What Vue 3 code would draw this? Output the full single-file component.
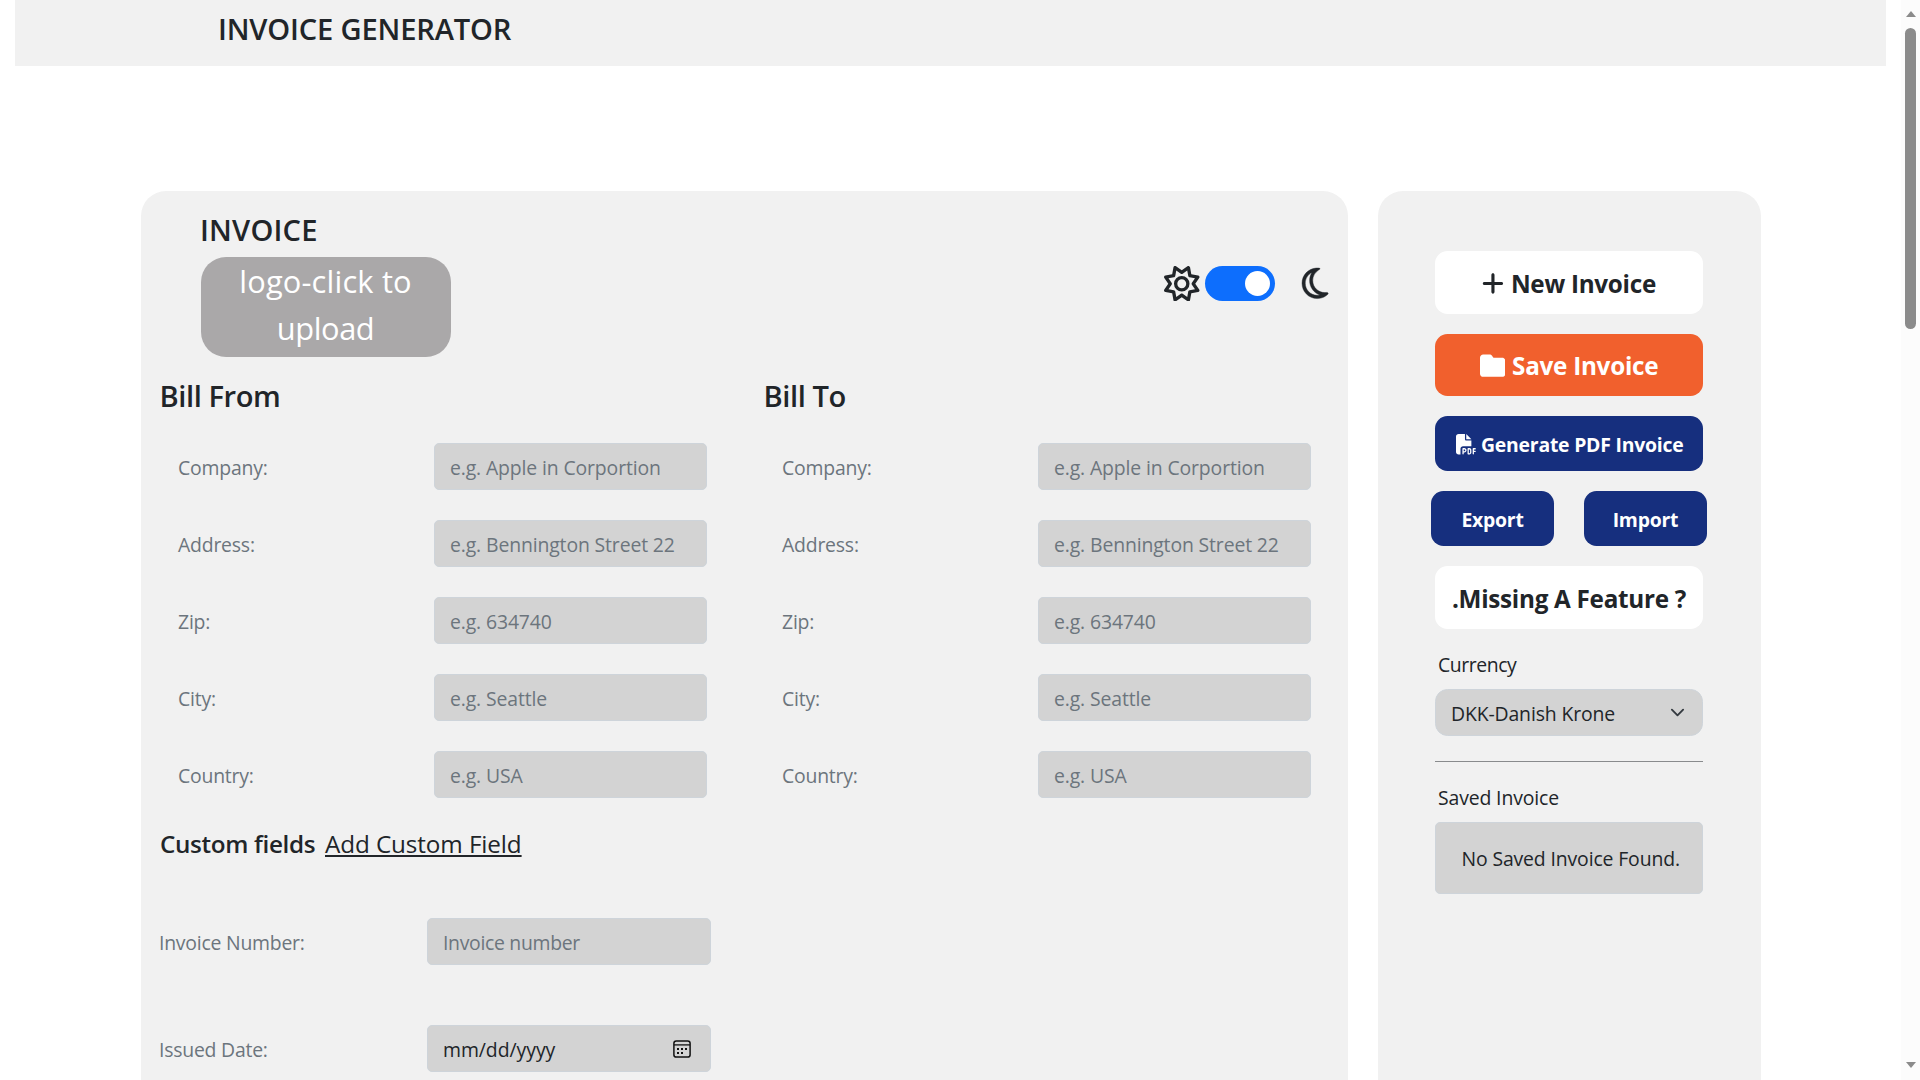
<script setup>
import { ref } from 'vue'

const parties = [{ title: 'Bill From' }, { title: 'Bill To' }]

const fields = [
  { label: 'Company:', placeholder: 'e.g. Apple in Corportion' },
  { label: 'Address:', placeholder: 'e.g. Bennington Street 22' },
  { label: 'Zip:', placeholder: 'e.g. 634740' },
  { label: 'City:', placeholder: 'e.g. Seattle' },
  { label: 'Country:', placeholder: 'e.g. USA' },
]

const dark = ref(true)
</script>

<template>
  <div class="page">
    <div class="content">
      <header class="topbar">
        <h1>INVOICE GENERATOR</h1>
      </header>

      <main class="columns">
        <section class="panel invoice">
          <h2 class="invoice-title">INVOICE</h2>
          <div class="brand-row">
            <button class="logo" type="button">
              <span class="logo-line">logo-click to</span>
              <span class="logo-line tight">upload</span>
            </button>
            <div class="theme">
              <svg class="sun" viewBox="0 0 512 512" fill="currentColor">
                <path d="M375.7 19.7c-1.5-8-6.9-14.7-14.4-17.8s-16.1-2.2-22.8 2.4L256 61.1 173.5 4.2c-6.7-4.6-15.3-5.5-22.8-2.4s-12.9 9.8-14.4 17.8l-18.1 98.5L19.7 136.3c-8 1.5-14.7 6.9-17.8 14.4s-2.2 16.1 2.4 22.8L61.1 256 4.2 338.5c-4.6 6.7-5.5 15.3-2.4 22.8s9.8 13 17.8 14.4l98.5 18.1 18.1 98.5c1.5 8 6.9 14.7 14.4 17.8s16.1 2.2 22.8-2.4L256 450.9l82.5 56.9c6.7 4.6 15.3 5.5 22.8 2.4s12.9-9.8 14.4-17.8l18.1-98.5 98.5-18.1c8-1.5 14.7-6.9 17.8-14.4s2.2-16.1-2.4-22.8L450.9 256l56.9-82.5c4.6-6.7 5.5-15.3 2.4-22.8s-9.8-12.9-17.8-14.4l-98.5-18.1L375.7 19.7zM269.6 110l65.6-45.2 14.4 78.3c1.8 9.8 9.5 17.5 19.3 19.3l78.3 14.4L402 242.4c-5.7 8.2-5.7 19 0 27.2l45.2 65.6-78.3 14.4c-9.8 1.8-17.5 9.5-19.3 19.3l-14.4 78.3L269.6 402c-8.2-5.7-19-5.7-27.2 0l-65.6 45.2-14.4-78.3c-1.8-9.8-9.5-17.5-19.3-19.3L64.8 335.2 110 269.6c5.7-8.2 5.7-19 0-27.2L64.8 176.8l78.3-14.4c9.8-1.8 17.5-9.5 19.3-19.3l14.4-78.3L242.4 110c8.2 5.7 19 5.7 27.2 0zM256 368a112 112 0 1 0 0-224 112 112 0 1 0 0 224zM192 256a64 64 0 1 1 128 0 64 64 0 1 1 -128 0z" />
              </svg>
              <button class="switch" :class="{ on: dark }" type="button" aria-label="Theme" @click="dark = !dark">
                <span class="knob"></span>
              </button>
              <svg class="moon" viewBox="0 32 384 448" fill="currentColor" fill-rule="evenodd" stroke="currentColor" stroke-width="6">
                <path d="M144.7 98.7c-21 34.1-33.1 74.3-33.1 117.3c0 98 62.8 181.4 150.4 211.7c-12.4 2.8-25.3 4.3-38.6 4.3C126.6 432 48 353.3 48 256c0-68.9 39.4-128.4 96.8-157.3zM206.8 32.7C91.1 41.2 0 137.9 0 256C0 379.7 100 480 223.5 480C271.3 480 315.5 465 351.9 439.4C361.6 432.5 370.6 425 379 416.7C384 411.8 385.3 404.2 382.1 398S372 388.3 365.1 389.5C355.3 391.2 345.2 392 335 392C236 392 157.6 315 157.6 216C157.6 150 193 94 243 62.5C247 60 251 57.5 255 55.5C261 52 264.5 45 263 40S255.8 33.5 249 33C240 32 228 31.8 206.8 32.7Z" />
              </svg>
            </div>
          </div>

          <div class="parties">
            <div v-for="party in parties" :key="party.title" class="party">
              <h3>{{ party.title }}</h3>
              <label v-for="field in fields" :key="field.label" class="field">
                <span class="field-label">{{ field.label }}</span>
                <input class="control" type="text" :placeholder="field.placeholder" />
              </label>
            </div>
          </div>

          <div class="custom">
            <h4>Custom fields</h4>
            <a>Add Custom Field</a>
          </div>

          <div class="details">
            <label class="detail">
              <span class="detail-label">Invoice Number:</span>
              <input class="control" type="text" placeholder="Invoice number" />
            </label>
            <label class="detail">
              <span class="detail-label">Issued Date:</span>
              <span class="control date">
                mm/dd/yyyy
                <svg class="calendar" viewBox="0 0 18 18">
                  <rect x="0.9" y="0.9" width="16.2" height="16.2" rx="2.4" fill="none" stroke="#111" stroke-width="1.5" />
                  <path d="M1 4.9h16" stroke="#111" stroke-width="1.3" />
                  <g fill="#111">
                    <rect x="4" y="8" width="2" height="2" />
                    <rect x="8" y="8" width="2" height="2" />
                    <rect x="12" y="8" width="2" height="2" />
                    <rect x="4" y="12" width="2" height="2" />
                    <rect x="8" y="12" width="2" height="2" />
                  </g>
                </svg>
              </span>
            </label>
          </div>
        </section>

        <aside class="panel actions">
          <button class="btn light big new" type="button">
            <svg class="plus" viewBox="0 0 448 512" fill="currentColor">
              <path d="M256 80c0-17.7-14.3-32-32-32s-32 14.3-32 32V224H48c-17.7 0-32 14.3-32 32s14.3 32 32 32H192V432c0 17.7 14.3 32 32 32s32-14.3 32-32V288H400c17.7 0 32-14.3 32-32s-14.3-32-32-32H256V80z" />
            </svg>
            New Invoice
          </button>
          <button class="btn orange big save" type="button">
            <svg class="folder" viewBox="0 0 512 512" fill="currentColor">
              <path d="M64 480H448c35.3 0 64-28.7 64-64V160c0-35.3-28.7-64-64-64H288c-10.1 0-19.6-4.7-25.6-12.8L243.2 57.6C231.1 41.5 212.1 32 192 32H64C28.7 32 0 60.7 0 96V416c0 35.3 28.7 64 64 64z" />
            </svg>
            Save Invoice
          </button>
          <button class="btn navy generate" type="button">
            <svg class="pdf" viewBox="0 0 512 512" fill="currentColor">
              <path d="M0 64C0 28.7 28.7 0 64 0H224V128c0 17.7 14.3 32 32 32H384V304H176c-35.3 0-64 28.7-64 64V512H64c-35.3 0-64-28.7-64-64V64zm384 64H256V0L384 128zM176 352h32c30.9 0 56 25.1 56 56s-25.1 56-56 56H192v32c0 8.8-7.2 16-16 16s-16-7.2-16-16V448 368c0-8.8 7.2-16 16-16zm32 80c13.3 0 24-10.7 24-24s-10.7-24-24-24H192v48h16zm96-80h32c26.5 0 48 21.5 48 48v64c0 26.5-21.5 48-48 48H304c-8.8 0-16-7.2-16-16V368c0-8.8 7.2-16 16-16zm32 128c8.8 0 16-7.2 16-16V400c0-8.8-7.2-16-16-16H320v96h16zm80-112c0-8.8 7.2-16 16-16h48c8.8 0 16 7.2 16 16s-7.2 16-16 16H448v32h32c8.8 0 16 7.2 16 16s-7.2 16-16 16H448v48c0 8.8-7.2 16-16 16s-16-7.2-16-16V432 368z" />
            </svg>
            Generate PDF Invoice
          </button>
          <div class="pair">
            <button class="btn navy" type="button">Export</button>
            <button class="btn navy" type="button">Import</button>
          </div>
          <button class="btn light big" type="button">.Missing A Feature ?</button>

          <p class="caption currency">Currency</p>
          <div class="select">
            DKK-Danish Krone
            <svg class="chevron" viewBox="0 0 16 16" fill="none" stroke="#343a40" stroke-width="2" stroke-linecap="round" stroke-linejoin="round">
              <path d="m2 5 6 6 6-6" />
            </svg>
          </div>
          <hr />
          <p class="caption saved">Saved Invoice</p>
          <div class="empty">No Saved Invoice Found.</div>
        </aside>
      </main>
    </div>

    <div class="scrollbar">
      <span class="arrow up"></span>
      <span class="thumb"></span>
      <span class="arrow down"></span>
    </div>
  </div>
</template>

<style>
body {
  margin: 0;
  background: #fff;
}
</style>

<style scoped>
.page {
  display: flex;
  width: 1920px;
  height: 1080px;
  overflow: hidden;
  color: #212529;
  font: 400 19.4px/30px "Open Sans", "Noto Sans", sans-serif;
  letter-spacing: -0.13px;
}

.page * {
  box-sizing: border-box;
}

h1,
h2,
h3,
h4,
p {
  margin: 0;
}

button,
input {
  font: inherit;
  letter-spacing: inherit;
  border: 0;
  margin: 0;
}

svg {
  display: block;
  flex: none;
}

.content {
  width: 1901px;
  padding: 0 15px;
}

.topbar {
  height: 66px;
  padding: 11px 0 0 203px;
  background: #f1f1f1;
}

h1,
h2,
h3 {
  font-size: 29.1px;
  line-height: 36px;
  font-weight: 600;
}

h1 {
  letter-spacing: -0.16px;
}

.columns {
  display: flex;
  gap: 30px;
  height: 889px;
  margin: 125px 0 0 126px;
}

.panel {
  background: #f1f1f1;
  border-radius: 25px 25px 0 0;
}

.invoice {
  width: 1207px;
  padding: 21px 20px 0 18px;
}

.invoice-title {
  height: 45px;
  padding-left: 41px;
  letter-spacing: 0.2px;
}

.brand-row {
  display: flex;
  justify-content: space-between;
  height: 100px;
  padding-left: 42px;
}

.logo {
  display: flex;
  flex-direction: column;
  align-items: center;
  width: 250px;
  height: 100px;
  padding: 1px 1px 0 0;
  border-radius: 25px;
  background: #aaa8a9;
  color: #fff;
  font-size: 30.8px;
  line-height: 47px;
}

.logo-line {
  letter-spacing: 0.18px;
}

.logo-line.tight {
  letter-spacing: -0.4px;
}

.theme {
  display: flex;
  align-items: center;
  height: 53px;
}

.sun {
  width: 35.5px;
  height: 35.5px;
}

.switch {
  display: flex;
  align-items: center;
  width: 70px;
  height: 35px;
  margin: 0 27px 0 5px;
  padding: 0 5px;
  border-radius: 18px;
  background: #adb5bd;
}

.switch.on {
  justify-content: flex-end;
  background: #0d6efd;
}

.knob {
  width: 25px;
  height: 25px;
  border-radius: 50%;
  background: #fff;
}

.moon {
  width: 26.2px;
  height: 30.6px;
  overflow: visible;
}

.parties {
  display: flex;
  margin-top: 21px;
}

.party {
  width: 604px;
  flex: none;
}

h3 {
  height: 65px;
  padding-left: 0.5px;
  letter-spacing: -0.42px;
}

.field {
  display: flex;
  align-items: center;
  height: 47px;
  padding-left: 19px;
  margin-bottom: 30px;
}

.field-label,
.detail-label {
  padding-top: 2px;
  color: #6c757d;
}

.field-label {
  width: 256px;
  letter-spacing: -0.2px;
}

.control {
  width: 273px;
  height: 47px;
  padding: 2px 15px 0;
  border: 1px solid #ced4da;
  border-radius: 5px;
  background: #d3d3d3;
  color: #212529;
}

.control::placeholder {
  color: #6c757d;
  opacity: 1;
}

.custom {
  display: flex;
  gap: 10px;
  height: 30px;
  padding-top: 1px;
  font-size: 24.25px;
}

h4 {
  width: 156px;
  padding-left: 1px;
  font-size: inherit;
  font-weight: 600;
  letter-spacing: -0.33px;
  white-space: nowrap;
}

.custom a {
  letter-spacing: -0.1px;
  text-decoration: underline;
  text-decoration-thickness: 2px;
  text-underline-offset: 2px;
}

.details {
  display: flex;
  flex-direction: column;
  gap: 60px;
  margin-top: 60px;
}

.detail {
  display: flex;
  align-items: center;
}

.detail-label {
  width: 268px;
  letter-spacing: -0.22px;
}

.detail .control {
  width: 284px;
  letter-spacing: -0.3px;
}

.detail .date {
  display: flex;
  align-items: center;
  justify-content: space-between;
  padding-right: 19px;
  letter-spacing: -0.05px;
}

.calendar {
  width: 18px;
  height: 18px;
  margin-top: -2px;
}

.actions {
  width: 383px;
  padding: 60px 58px 0 57px;
}

.btn {
  display: flex;
  align-items: center;
  justify-content: center;
  width: 100%;
  height: 55px;
  margin-bottom: 20px;
  padding: 2px 0 0;
  border-radius: 12.5px;
  font-weight: 700;
  letter-spacing: -0.22px;
  white-space: nowrap;
}

.btn.big {
  height: 63px;
  font-size: 24.25px;
  letter-spacing: -0.27px;
}

.btn.save {
  height: 62px;
  padding-top: 1px;
}

.btn.generate {
  padding-left: 1px;
}

.light {
  background: #fff;
  color: #212529;
}

.orange {
  background: #f1602d;
  color: #fff;
}

.navy {
  background: #162f7e;
  color: #fff;
}

.plus {
  width: 21.9px;
  height: 25px;
  margin-right: 7px;
}

.folder {
  width: 25.4px;
  height: 25.4px;
  margin-right: 7px;
}

.pdf {
  width: 20.5px;
  height: 20.5px;
  margin-right: 5px;
}

.pair {
  display: flex;
  gap: 30px;
  margin: 0 -4px;
}

.pair .btn {
  width: 123px;
}

.caption {
  height: 30px;
  padding-left: 3px;
}

.caption.currency {
  height: 40px;
  padding-top: 1px;
  letter-spacing: -0.43px;
}

.select {
  display: flex;
  align-items: center;
  justify-content: space-between;
  height: 47px;
  padding: 2px 17px 0 15px;
  border: 1px solid #ced4da;
  border-radius: 12.5px;
  background: #d3d3d3;
}

.chevron {
  width: 15px;
  height: 15px;
  margin-top: -2px;
}

hr {
  height: 1px;
  margin: 25px 0 21px;
  border: 0;
  background: #898b8d;
}

.caption.saved {
  height: 39px;
}

.empty {
  display: flex;
  align-items: center;
  height: 72px;
  padding: 2px 0 0 25.5px;
  border: 1px solid #ced4da;
  border-radius: 5px;
  background: #d3d3d3;
  white-space: nowrap;
}

.scrollbar {
  display: flex;
  flex-direction: column;
  align-items: center;
  width: 19px;
  padding: 11px 0 12px;
  background: #fcfcfc;
}

.arrow {
  border: 5.5px solid transparent;
}

.arrow.up {
  border-top: 0;
  border-bottom: 6px solid #8b8b8b;
}

.thumb {
  width: 11px;
  height: 301px;
  margin: 11px 0 auto;
  border-radius: 6px;
  background: #8b8b8b;
}

.arrow.down {
  border-bottom: 0;
  border-top: 6px solid #8b8b8b;
}
</style>
